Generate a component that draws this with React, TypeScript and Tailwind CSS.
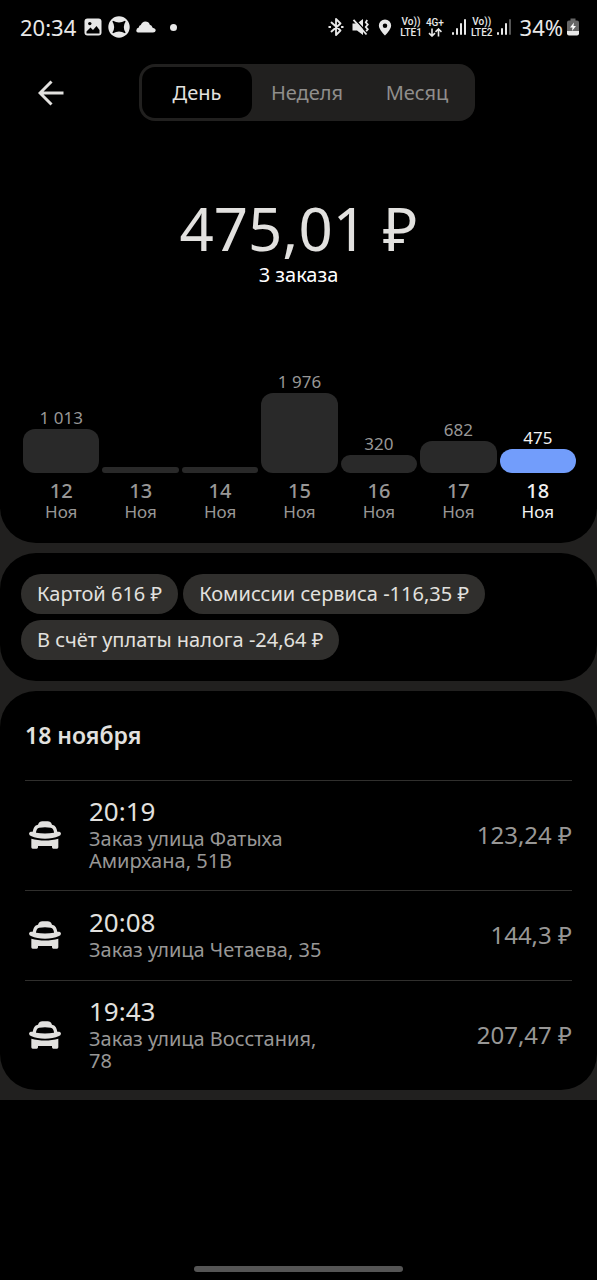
import { useState } from 'react';

type Day = { day: string; month: string; value?: string; height: number };
type Order = { time: string; address: string; price: string };

const periods = ['День', 'Неделя', 'Месяц'];

const days: Day[] = [
  { day: '12', month: 'Ноя', value: '1 013', height: 44 },
  { day: '13', month: 'Ноя', height: 6 },
  { day: '14', month: 'Ноя', height: 6 },
  { day: '15', month: 'Ноя', value: '1 976', height: 80 },
  { day: '16', month: 'Ноя', value: '320', height: 18 },
  { day: '17', month: 'Ноя', value: '682', height: 32 },
  { day: '18', month: 'Ноя', value: '475', height: 24 },
];

const chips = ['Картой 616 ₽', 'Комиссии сервиса -116,35 ₽', 'В счёт уплаты налога -24,64 ₽'];

const orders: Order[] = [
  { time: '20:19', address: 'Заказ улица Фатыха Амирхана, 51В', price: '123,24 ₽' },
  { time: '20:08', address: 'Заказ улица Четаева, 35', price: '144,3 ₽' },
  { time: '19:43', address: 'Заказ улица Восстания, 78', price: '207,47 ₽' },
];

function TaxiIcon() {
  return (
    <svg viewBox="0 0 96 84" className="h-7 w-8 shrink-0" fill="#e2e1df" aria-hidden="true">
      <path
        fillRule="evenodd"
        d="M27 11 Q31 1 40 1 H56 Q65 1 69 11 Q77 12 80 18 Q84 25 85 32 L91 32 Q96 33 96 38 Q95 43 90 45 C78 51 64 53 48 53 C32 53 18 51 6 45 Q1 43 0 38 Q0 33 5 32 L11 32 Q12 25 16 18 Q19 12 27 11 Z M31 20 Q26 21 24 25 Q21 30 21 35 C38 38 58 38 75 35 Q75 30 72 25 Q70 21 65 20 C54 18 42 18 31 20 Z"
      />
      <path d="M7 53 C32 60 64 60 88 53 V79 Q88 83 84 83 H73 Q69 83 69 79 V75 H27 V79 Q27 83 23 83 H11 Q7 83 7 79 Z" />
    </svg>
  );
}

function SignalIcon({ dim }: { dim?: boolean }) {
  return (
    <svg viewBox="0 0 15 16" className="h-4 w-[15px]" fill="#e8e8e8" aria-hidden="true">
      <rect x="0" y="13" width="2" height="3" rx="1" />
      <rect x="4" y="9" width="2" height="7" rx="1" />
      <rect x="8" y="4" width="2" height="12" rx="1" />
      <rect x="12" y="0" width="2" height="16" rx="1" fill={dim ? '#555' : '#e8e8e8'} />
    </svg>
  );
}

function VoLte({ line }: { line: string }) {
  return (
    <span className="flex flex-col items-center font-[Roboto,sans-serif] text-[10px] leading-[11px] font-medium">
      <span>Vo))</span>
      <span>{line}</span>
    </span>
  );
}

function StatusBar() {
  return (
    <div className="flex h-[54px] items-center justify-between pr-[18px] pl-5 text-[#e8e8e8]">
      <div className="flex items-center gap-[6px]">
        <span className="mr-[2px] text-[22px] leading-6">20:34</span>
        <svg viewBox="0 0 18 18" className="h-[18px] w-[18px]" aria-hidden="true">
          <rect x="0.5" y="0.5" width="17" height="17" rx="3" fill="#e8e8e8" />
          <path d="M2.5 13.5 6.5 9.5 9 12 12.5 8 15.5 12V15.5H2.5Z" fill="#000" />
          <circle cx="5.8" cy="5.6" r="1.7" fill="#000" />
        </svg>
        <svg viewBox="0 0 22 22" className="h-[22px] w-[22px]" aria-hidden="true">
          <circle cx="11" cy="11" r="10.7" fill="#e8e8e8" />
          <path
            d="M5 4.8 Q11 8.4 17 4.8 L17.6 5.4 Q14 11 17.6 16.6 L17 17.2 Q11 13.6 5 17.2 L4.4 16.6 Q8 11 4.4 5.4 Z"
            fill="#000"
          />
        </svg>
        <svg viewBox="0 0 20 12" className="h-3 w-5" fill="#e8e8e8" aria-hidden="true">
          <path d="M3 11.5 Q0.3 11.5 0.3 9.4 Q0.4 7 2.8 6.6 Q3 4.3 4.8 4 Q6.2 0.5 9.3 0.5 Q12.8 0.5 13.8 3.8 Q16 4.2 16.6 6.7 Q19.7 7.3 19.7 9.5 Q19.5 11.5 17 11.5 Z" />
        </svg>
        <span className="ml-2 h-[7px] w-[7px] rounded-full bg-[#e8e8e8]" />
      </div>
      <div className="flex items-center gap-1">
        <svg viewBox="0 0 16 18" className="h-[18px] w-4" fill="none" stroke="#e8e8e8" strokeWidth="1.8" aria-hidden="true">
          <path d="M3.5 4.5 12.5 12.5 8 17V1L12.5 5.5 3.5 13.5" strokeLinejoin="round" strokeLinecap="round" />
          <path d="M0.5 9h2.4M13.1 9h2.4" />
        </svg>
        <svg viewBox="0 0 18 18" className="ml-1 h-[18px] w-[18px]" aria-hidden="true">
          <path d="M0.5 5.5h4.500l6-4.500v16L5 12.500H0.500Z" fill="#e8e8e8" />
          <path d="M3 1.500 16 15.500" stroke="#000" strokeWidth="1.4" />
          <path d="M1.500 1.800 14.500 16.500" stroke="#e8e8e8" strokeWidth="1.8" />
          <path d="M15.2 2l-1.4 2.3 2 2.3-2 2.4 2 2.3-1.6 2" stroke="#e8e8e8" strokeWidth="1.8" fill="none" />
        </svg>
        <svg viewBox="0 0 14 18" className="mx-1 h-[17px] w-[14px]" aria-hidden="true">
          <path
            d="M7 .5A6.5 6.5 0 0 0 .5 7C.5 11.5 7 17.5 7 17.5S13.5 11.5 13.5 7A6.5 6.5 0 0 0 7 .5Zm0 4.2a2.4 2.4 0 1 1 0 4.8 2.4 2.4 0 0 1 0-4.8Z"
            fill="#e8e8e8"
            fillRule="evenodd"
          />
        </svg>
        <VoLte line="LTE1" />
        <span className="flex flex-col items-center font-[Roboto,sans-serif] text-[10px] leading-[11px] font-medium">
          <span>4G+</span>
          <svg viewBox="0 0 14 9" className="h-[9px] w-[14px]" fill="none" stroke="#e8e8e8" strokeWidth="1.6" aria-hidden="true">
            <path d="M4 0.5V8M1 5.2 4 8 7 5.2M10.5 8.5V1M7.5 3.8 10.5 1 13.5 3.8" />
          </svg>
        </span>
        <span className="ml-1 flex">
          <SignalIcon />
        </span>
        <VoLte line="LTE2" />
        <SignalIcon dim />
        <span className="ml-1 text-[22px] leading-6">34%</span>
        <svg viewBox="0 0 12 18" className="h-[18px] w-3" aria-hidden="true">
          <path d="M3.5 0.5h5v2h1.5q2 0 2 2V13H0V4.5q0-2 2-2h1.5Z" fill="#666" />
          <path d="M0 13h12v2.5q0 2-2 2H2q-2 0-2-2Z" fill="#e8e8e8" />
          <path d="M7 4.5 3 9.5h2.5L5 13l4-5H6.5Z" fill="#fff" />
        </svg>
      </div>
    </div>
  );
}

export default function App() {
  const [period, setPeriod] = useState('День');
  const [selected, setSelected] = useState('18');

  return (
    <div className="flex min-h-screen flex-col bg-black font-['Noto_Sans','Open_Sans',sans-serif] text-[#e2e1df]">
      <main className="flex flex-col gap-[10px] bg-[#21201f] pb-[10px]">
        <section className="rounded-b-[36px] bg-black pb-5">
          <StatusBar />
          <header className="flex items-center pt-[10px] pr-[58px] pl-[27px]">
            <button type="button" aria-label="Назад" className="flex h-12 w-12 items-center justify-center">
              <svg viewBox="0 0 26 26" className="h-[26px] w-[26px]" fill="none" stroke="#e2e1df" strokeWidth="3" aria-hidden="true">
                <path d="M25.5 13H2.5M13.5 1.5 2 13 13.5 24.5" />
              </svg>
            </button>
            <div className="flex flex-1 justify-center">
              <div className="grid w-84 grid-cols-3 rounded-2xl bg-[#21201f] p-[3px]">
                {periods.map((p) => (
                  <button
                    key={p}
                    type="button"
                    aria-pressed={p === period}
                    onClick={() => setPeriod(p)}
                    className={
                      p === period
                        ? 'h-[51px] rounded-[13px] bg-black text-[20px] text-[#e2e1df]'
                        : 'h-[51px] rounded-[13px] text-[20px] text-[#8f8e8c]'
                    }
                  >
                    {p}
                  </button>
                ))}
              </div>
            </div>
          </header>

          <div className="flex flex-col items-center pt-[72px]">
            <h1 className="text-[60px] leading-[70px]">475,01 ₽</h1>
            <p className="text-[20px] leading-6 text-white">3 заказа</p>
          </div>

          <div className="grid h-[236px] grid-cols-7 items-end gap-[3px] pr-[21px] pl-[23px]">
            {days.map((d) => (
              <button
                key={d.day}
                type="button"
                onClick={() => setSelected(d.day)}
                className={
                  d.day === selected
                    ? 'flex flex-col items-center text-[#f2f2f2]'
                    : 'flex flex-col items-center text-[#989796]'
                }
              >
                {d.value && <span className="text-[17px] leading-[22px]">{d.value}</span>}
                <span
                  className={
                    d.day === selected
                      ? 'w-full rounded-[12px] bg-[#729dfb]'
                      : 'w-full rounded-[12px] bg-[#292929]'
                  }
                  style={{ height: d.height }}
                />
                <span className="mt-2 text-[20px] leading-5 font-medium">{d.day}</span>
                <span className="text-[17px] leading-[22px]">{d.month}</span>
              </button>
            ))}
          </div>
        </section>

        <section className="rounded-[36px] bg-black px-[21px] py-[21px]">
          <ul className="flex flex-wrap gap-x-[5px] gap-y-[6px]">
            {chips.map((c) => (
              <li key={c} className="rounded-full bg-[#302f2d] px-4 text-[20px] leading-10">
                {c}
              </li>
            ))}
          </ul>
        </section>

        <section className="rounded-[36px] bg-black px-[25px] pt-7">
          <h2 className="pb-[29px] text-[23px] leading-8 font-semibold">18 ноября</h2>
          <ul>
            {orders.map((o) => (
              <li key={o.time} className="flex min-h-[90px] items-center border-t border-[#302f2d] pt-[17px] pb-[18px]">
                <span className="flex w-16 pl-1">
                  <TaxiIcon />
                </span>
                <div className="w-60">
                  <p className="mb-1 text-[26px] leading-[26px]">{o.time}</p>
                  <p className="text-[20px] leading-[22px] text-[#989796]">{o.address}</p>
                </div>
                <p className="ml-auto text-[24px] leading-8 text-[#989796]">{o.price}</p>
              </li>
            ))}
          </ul>
        </section>
      </main>

      <footer className="mt-auto flex justify-center pb-2">
        <span className="h-[6px] w-[209px] rounded-full bg-[#555]" />
      </footer>
    </div>
  );
}
